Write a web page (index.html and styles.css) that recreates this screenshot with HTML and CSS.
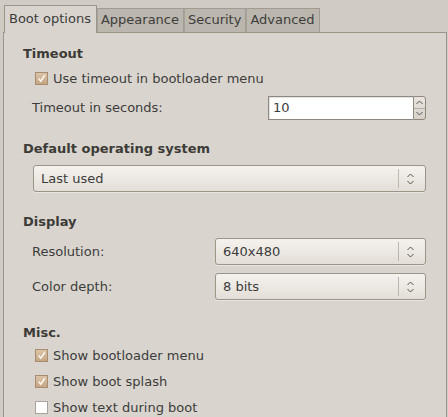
FILE: index.html
```html
<!DOCTYPE html>
<html lang="en">
<head>
  <meta charset="UTF-8" />
  <title>Boot options</title>
  <link rel="stylesheet" href="styles.css">
</head>
<body>
  <div class="tabs">
    <div class="tab ativo">Boot options</div>
    <div class="tab">Appearance</div>
    <div class="tab">Security</div>
    <div class="tab">Advanced</div>
  </div>

  <div class="painel">
    <div class="secao">
      <h2>Timeout</h2>
      <label class="check">
        <span class="caixa marcada"><svg width="9" height="9" viewBox="0 0 9 9"><path d="M1.5 4.5 L3.8 7.2 L7.8 1.2" fill="none" stroke="#fbf6ef" stroke-width="1.6"/></svg></span>
        Use timeout in bootloader menu
      </label>
      <div class="linha">
        <span>Timeout in seconds:</span>
        <div class="spin">
          <div class="entrada">10</div>
          <div class="botoes">
            <div class="seta"><svg width="7" height="5" viewBox="0 0 7 5"><path d="M0.5 4 L3.5 1 L6.5 4" fill="none" stroke="#55524c" stroke-width="1"/></svg></div>
            <div class="seta"><svg width="7" height="5" viewBox="0 0 7 5"><path d="M0.5 1 L3.5 4 L6.5 1" fill="none" stroke="#55524c" stroke-width="1"/></svg></div>
          </div>
        </div>
      </div>
    </div>

    <div class="secao sistema">
      <h2>Default operating system</h2>
      <div class="combo largo">
        <span>Last used</span>
        <i class="divisor"></i>
        <svg width="7" height="12" viewBox="0 0 7 12"><path d="M0.5 4 L3.5 1 L6.5 4 M0.5 8 L3.5 11 L6.5 8" fill="none" stroke="#55524c" stroke-width="1"/></svg>
      </div>
    </div>

    <div class="secao display">
      <h2>Display</h2>
      <div class="linha">
        <span>Resolution:</span>
        <div class="combo">
          <span>640x480</span>
          <i class="divisor"></i>
          <svg width="7" height="12" viewBox="0 0 7 12"><path d="M0.5 4 L3.5 1 L6.5 4 M0.5 8 L3.5 11 L6.5 8" fill="none" stroke="#55524c" stroke-width="1"/></svg>
        </div>
      </div>
      <div class="linha">
        <span>Color depth:</span>
        <div class="combo">
          <span>8 bits</span>
          <i class="divisor"></i>
          <svg width="7" height="12" viewBox="0 0 7 12"><path d="M0.5 4 L3.5 1 L6.5 4 M0.5 8 L3.5 11 L6.5 8" fill="none" stroke="#55524c" stroke-width="1"/></svg>
        </div>
      </div>
    </div>

    <div class="secao misc">
      <h2>Misc.</h2>
      <label class="check">
        <span class="caixa marcada"><svg width="9" height="9" viewBox="0 0 9 9"><path d="M1.5 4.5 L3.8 7.2 L7.8 1.2" fill="none" stroke="#fbf6ef" stroke-width="1.6"/></svg></span>
        Show bootloader menu
      </label>
      <label class="check">
        <span class="caixa marcada"><svg width="9" height="9" viewBox="0 0 9 9"><path d="M1.5 4.5 L3.8 7.2 L7.8 1.2" fill="none" stroke="#fbf6ef" stroke-width="1.6"/></svg></span>
        Show boot splash
      </label>
      <label class="check">
        <span class="caixa"></span>
        Show text during boot
      </label>
    </div>
  </div>
</body>
</html>
```

FILE: styles.css
```css
* {
  margin: 0;
  padding: 0;
  box-sizing: border-box;
}

body {
  background-color: #d0ccc4;
  color: #3c3c3c;
  font-family: 'DejaVu Sans', 'Liberation Sans', sans-serif;
  font-size: 13px;
  height: 100vh;
  overflow: hidden;
  padding: 4px 1px 0 3px;
}

.tabs {
  display: flex;
  align-items: flex-end;
  height: 28px;
  padding-left: 1px;
}

.tab {
  height: 24px;
  padding: 0 4px 0 3px;
  line-height: 22px;
  background-color: #bcb7ae;
  border: 1px solid #a19b92;
  border-bottom: none;
  color: #3c3c3c;
}

.tab + .tab {
  border-left: 1px solid #a8a299;
}

.tab.ativo {
  height: 28px;
  line-height: 26px;
  padding: 0 5px 0 4px;
  background-color: #d9d5ce;
  border-color: #9a948b;
  position: relative;
  top: 1px;
}

.painel {
  background-color: #d9d5ce;
  border: 1px solid #9a948b;
  height: 400px;
  padding: 12px 20px 0 19px;
  display: flex;
  flex-direction: column;
  gap: 20px;
}

.secao {
  display: flex;
  flex-direction: column;
  gap: 6px;
}

.secao.sistema {
  gap: 8px;
}

.secao.display {
  gap: 8px;
  margin-top: 1px;
}

.secao.misc {
  margin-top: 4px;
}

.secao.misc h2 {
  margin-bottom: -2px;
}

.secao h2 {
  font-size: 13px;
  font-weight: bold;
  line-height: 17px;
  color: #3c3b37;
}

.check {
  display: flex;
  align-items: center;
  gap: 5px;
  height: 20px;
  padding-left: 12px;
}

.caixa {
  width: 13px;
  height: 13px;
  border: 1px solid #a8a39b;
  background-color: #ffffff;
  display: flex;
  align-items: center;
  justify-content: center;
}

.caixa.marcada {
  background: linear-gradient(#dcc4a8, #c5a584);
  border-color: #a88c6f;
}

.linha {
  display: flex;
  align-items: center;
  justify-content: space-between;
  padding-left: 9px;
}

.spin {
  display: flex;
  width: 158px;
  height: 24px;
  margin-top: 2px;
}

.entrada {
  flex: 1;
  background-color: #ffffff;
  border: 1px solid #8e8880;
  border-right: none;
  padding-left: 4px;
  line-height: 22px;
  box-shadow: inset 1px 1px 1px rgba(0, 0, 0, 0.12);
}

.botoes {
  width: 13px;
  border: 1px solid #8e8880;
  border-radius: 0 3px 3px 0;
  background: linear-gradient(#e9e5de, #d6d1c9);
  display: flex;
  flex-direction: column;
}

.seta {
  flex: 1;
  display: flex;
  align-items: center;
  justify-content: center;
}

.seta + .seta {
  border-top: 1px solid #b1aca4;
}

.combo {
  display: flex;
  align-items: center;
  width: 211px;
  height: 27px;
  padding: 0 11px 0 7px;
  border: 1px solid #9a948b;
  border-radius: 3px;
  background: linear-gradient(#f5f2ee, #e3ded7);
  box-shadow: 0 1px 0 rgba(255, 255, 255, 0.4);
}

.combo.largo {
  width: auto;
  margin-left: 10px;
}

.combo span {
  flex: 1;
}

.combo .divisor {
  width: 1px;
  height: 19px;
  background-color: #bcb7ae;
  margin-right: 8px;
}
```
